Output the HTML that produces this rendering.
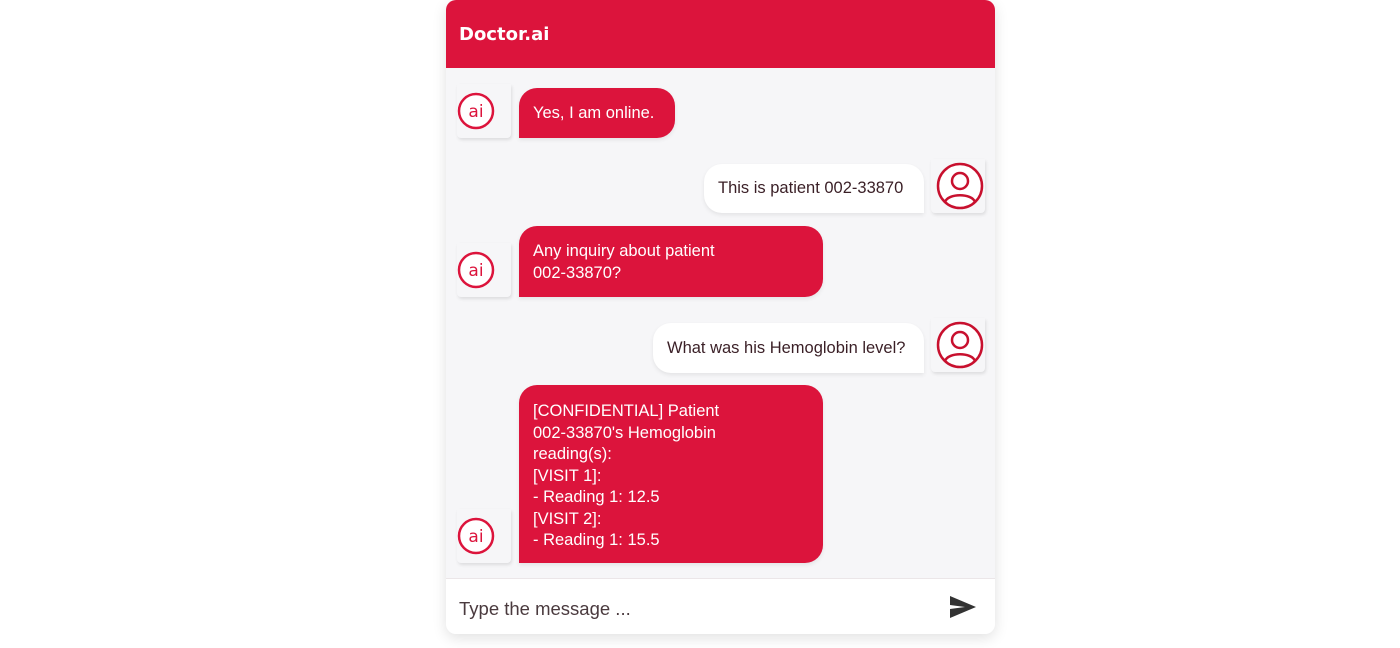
<!DOCTYPE html>
<html><head><meta charset="utf-8"><style>
body{margin:0;width:1400px;height:648px;background:#fff;font-family:"Liberation Sans","DejaVu Sans",sans-serif;overflow:hidden;position:relative}
.panel{position:absolute;left:446px;top:0;width:549px;height:634px;border-radius:10px;background:#f6f6f8;box-shadow:0 4px 14px rgba(0,0,0,.12);overflow:hidden}
.hdr{position:absolute;left:0;top:0;width:549px;height:68px;background:#dc143c;color:#fff;font-weight:bold;font-size:18px;line-height:70px;padding-left:13px;box-sizing:border-box;font-family:"DejaVu Sans",sans-serif}
.b{position:absolute;font-size:16.5px;line-height:21.5px;box-sizing:border-box;padding:0 14px;box-shadow:0 2px 4px rgba(0,0,0,.08);white-space:nowrap}
.ai{background:#dc143c;color:#fff;border-radius:18px 18px 18px 0}
.me{background:#fff;color:#3a1f26;border-radius:18px 18px 0 18px}
.av{position:absolute;width:54px;height:54px;box-shadow:1px 2px 3px rgba(0,0,0,.1);border-radius:0 0 4px 4px;background:#f6f6f8}
.av svg{position:absolute;left:0;top:0}
.inp{position:absolute;left:0;top:578px;width:549px;height:56px;background:#fff;border-top:1px solid #ebe6e8}
.inp span{position:absolute;left:13px;top:19px;font-size:18.5px;color:#4a3a3e}
</style></head><body>
<div class="panel">
<div class="hdr">Doctor.ai</div>

<div class="av" style="left:11px;top:84px"><svg width="54" height="54"><circle cx="19" cy="27" r="17" fill="#fff" stroke="#dc143c" stroke-width="2.5"/><text x="19" y="33" text-anchor="middle" font-family="DejaVu Sans,sans-serif" font-size="17" fill="#dc143c">ai</text></svg></div>
<div class="b ai" style="left:73px;top:88px;width:156px;height:50px;padding-top:15px">Yes, I am online.</div>

<div class="b me" style="left:258px;top:164px;width:220px;height:49px;padding-top:14px">This is patient 002-33870</div>
<div class="av" style="left:485px;top:159px"><svg width="54" height="54"><circle cx="29" cy="27" r="22" fill="#fff" stroke="#c8102e" stroke-width="2.5"/><circle cx="29" cy="22" r="8" fill="none" stroke="#c8102e" stroke-width="2.5"/><path d="M14 43 C17 34 41 34 44 43" fill="none" stroke="#c8102e" stroke-width="2.5"/></svg></div>

<div class="av" style="left:11px;top:243px"><svg width="54" height="54"><circle cx="19" cy="27" r="17" fill="#fff" stroke="#dc143c" stroke-width="2.5"/><text x="19" y="33" text-anchor="middle" font-family="DejaVu Sans,sans-serif" font-size="17" fill="#dc143c">ai</text></svg></div>
<div class="b ai" style="left:73px;top:226px;width:304px;height:71px;padding-top:15px">Any inquiry about patient<br>002-33870?</div>

<div class="b me" style="left:207px;top:323px;width:271px;height:50px;padding-top:15px">What was his Hemoglobin level?</div>
<div class="av" style="left:485px;top:318px"><svg width="54" height="54"><circle cx="29" cy="27" r="22" fill="#fff" stroke="#c8102e" stroke-width="2.5"/><circle cx="29" cy="22" r="8" fill="none" stroke="#c8102e" stroke-width="2.5"/><path d="M14 43 C17 34 41 34 44 43" fill="none" stroke="#c8102e" stroke-width="2.5"/></svg></div>

<div class="av" style="left:11px;top:509px"><svg width="54" height="54"><circle cx="19" cy="27" r="17" fill="#fff" stroke="#dc143c" stroke-width="2.5"/><text x="19" y="33" text-anchor="middle" font-family="DejaVu Sans,sans-serif" font-size="17" fill="#dc143c">ai</text></svg></div>
<div class="b ai" style="left:73px;top:385px;width:304px;height:178px;padding-top:16px">[CONFIDENTIAL] Patient<br>002-33870's Hemoglobin<br>reading(s):<br>[VISIT 1]:<br>- Reading 1: 12.5<br>[VISIT 2]:<br>- Reading 1: 15.5</div>

<div class="inp"><span>Type the message ...</span>
<svg style="position:absolute;left:503px;top:16px" width="28" height="24" viewBox="0 0 28 24"><path d="M1 1 L27 12 L1 23 L1 14 L16 12 L1 10 Z" fill="#333"/></svg></div>
</div>
</body></html>
